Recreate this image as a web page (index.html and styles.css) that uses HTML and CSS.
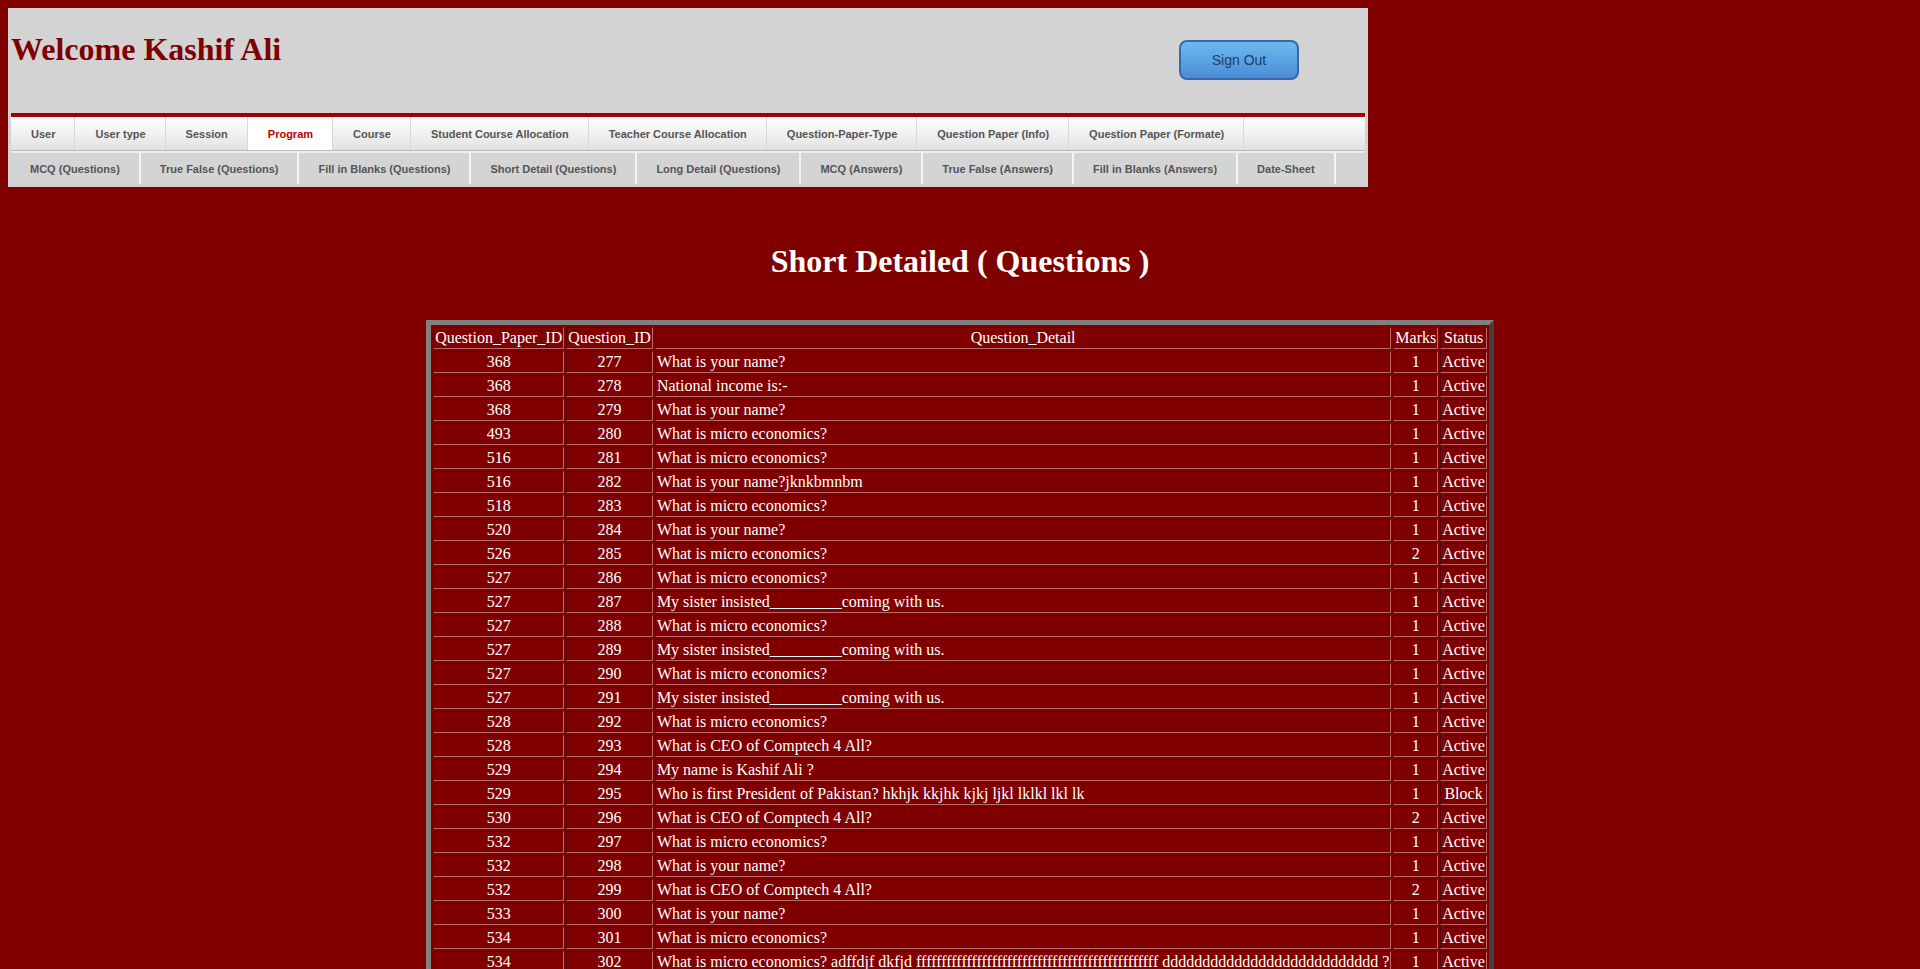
FILE: index.html
```html
<!DOCTYPE html>
<html>
<head>
<meta charset="utf-8">
<title>Short Detailed ( Questions )</title>
<link rel="stylesheet" href="styles.css">
</head>
<body>
<div class="panel">
  <div class="topbar">
    <h1 class="welcome">Welcome Kashif Ali</h1>
    <button class="signout" type="button">Sign Out</button>
  </div>
  <nav class="menu">
    <ul class="row row1">
      <li>User</li>
      <li>User type</li>
      <li>Session</li>
      <li class="active">Program</li>
      <li>Course</li>
      <li>Student Course Allocation</li>
      <li>Teacher Course Allocation</li>
      <li>Question-Paper-Type</li>
      <li>Question Paper (Info)</li>
      <li>Question Paper (Formate)</li>
    </ul>
    <ul class="row row2">
      <li>MCQ (Questions)</li>
      <li>True False (Questions)</li>
      <li>Fill in Blanks (Questions)</li>
      <li>Short Detail (Questions)</li>
      <li>Long Detail (Questions)</li>
      <li>MCQ (Answers)</li>
      <li>True False (Answers)</li>
      <li>Fill in Blanks (Answers)</li>
      <li>Date-Sheet</li>
    </ul>
  </nav>
</div>

<h1 class="page-title">Short Detailed ( Questions )</h1>

<table class="grid">
  <tr><th>Question_Paper_ID</th><th>Question_ID</th><th>Question_Detail</th><th>Marks</th><th>Status</th></tr>
  <tr><td>368</td><td>277</td><td class="q">What is your name?</td><td>1</td><td>Active</td></tr>
  <tr><td>368</td><td>278</td><td class="q">National income is:-</td><td>1</td><td>Active</td></tr>
  <tr><td>368</td><td>279</td><td class="q">What is your name?</td><td>1</td><td>Active</td></tr>
  <tr><td>493</td><td>280</td><td class="q">What is micro economics?</td><td>1</td><td>Active</td></tr>
  <tr><td>516</td><td>281</td><td class="q">What is micro economics?</td><td>1</td><td>Active</td></tr>
  <tr><td>516</td><td>282</td><td class="q">What is your name?jknkbmnbm</td><td>1</td><td>Active</td></tr>
  <tr><td>518</td><td>283</td><td class="q">What is micro economics?</td><td>1</td><td>Active</td></tr>
  <tr><td>520</td><td>284</td><td class="q">What is your name?</td><td>1</td><td>Active</td></tr>
  <tr><td>526</td><td>285</td><td class="q">What is micro economics?</td><td>2</td><td>Active</td></tr>
  <tr><td>527</td><td>286</td><td class="q">What is micro economics?</td><td>1</td><td>Active</td></tr>
  <tr><td>527</td><td>287</td><td class="q">My sister insisted_________coming with us.</td><td>1</td><td>Active</td></tr>
  <tr><td>527</td><td>288</td><td class="q">What is micro economics?</td><td>1</td><td>Active</td></tr>
  <tr><td>527</td><td>289</td><td class="q">My sister insisted_________coming with us.</td><td>1</td><td>Active</td></tr>
  <tr><td>527</td><td>290</td><td class="q">What is micro economics?</td><td>1</td><td>Active</td></tr>
  <tr><td>527</td><td>291</td><td class="q">My sister insisted_________coming with us.</td><td>1</td><td>Active</td></tr>
  <tr><td>528</td><td>292</td><td class="q">What is micro economics?</td><td>1</td><td>Active</td></tr>
  <tr><td>528</td><td>293</td><td class="q">What is CEO of Comptech 4 All?</td><td>1</td><td>Active</td></tr>
  <tr><td>529</td><td>294</td><td class="q">My name is Kashif Ali ?</td><td>1</td><td>Active</td></tr>
  <tr><td>529</td><td>295</td><td class="q">Who is first President of Pakistan? hkhjk kkjhk kjkj ljkl lklkl lkl lk</td><td>1</td><td>Block</td></tr>
  <tr><td>530</td><td>296</td><td class="q">What is CEO of Comptech 4 All?</td><td>2</td><td>Active</td></tr>
  <tr><td>532</td><td>297</td><td class="q">What is micro economics?</td><td>1</td><td>Active</td></tr>
  <tr><td>532</td><td>298</td><td class="q">What is your name?</td><td>1</td><td>Active</td></tr>
  <tr><td>532</td><td>299</td><td class="q">What is CEO of Comptech 4 All?</td><td>2</td><td>Active</td></tr>
  <tr><td>533</td><td>300</td><td class="q">What is your name?</td><td>1</td><td>Active</td></tr>
  <tr><td>534</td><td>301</td><td class="q">What is micro economics?</td><td>1</td><td>Active</td></tr>
  <tr><td>534</td><td>302</td><td class="q">What is micro economics? adffdjf dkfjd ffffffffffffffffffffffffffffffffffffffffffffffff ddddddddddddddddddddddddddd ?</td><td>1</td><td>Active</td></tr>
</table>
</body>
</html>
```

FILE: styles.css
```css
html, body {
  background: #800000;
}

body {
  margin: 8px;
  font-family: "Liberation Serif", "Times New Roman", serif;
}

.panel {
  width: 1354px;
  padding: 3px;
  background: #d3d3d3;
}

.topbar {
  display: flex;
  justify-content: space-between;
  align-items: flex-start;
  height: 102px;
}

.welcome {
  margin: 20px 0 0 0;
  font-size: 32px;
  line-height: 37px;
  font-weight: bold;
  color: #800000;
}

.signout {
  margin: 29px 66px 0 0;
  width: 120px;
  height: 40px;
  border: 2px solid #3769a9;
  border-radius: 8px;
  background: linear-gradient(#6cbaf0, #4a8cd5);
  color: #1d3d68;
  font-family: "Liberation Sans", Arial, sans-serif;
  font-size: 14px;
  padding: 0;
}

.menu {
  border-top: 4px solid #a60000;
}

.row {
  display: flex;
  list-style: none;
  margin: 0;
  padding: 0;
  font-family: "Liberation Sans", Arial, sans-serif;
  font-size: 11px;
  font-weight: bold;
  color: #555555;
}

.row li {
  display: flex;
  align-items: center;
  white-space: nowrap;
}

.row1 {
  height: 33px;
  background: linear-gradient(#ffffff, #e2e2e2);
  border-bottom: 1px solid #b9b9b9;
}

.row1 li {
  padding: 0 19px 0 20px;
  border-right: 1px solid #d9d9d9;
}

.row1 li.active {
  background: #ffffff;
  color: #c00000;
}

.row2 {
  height: 31px;
  background: #d4d4d4;
  border-top: 2px solid #ededed;
}

.row2 li {
  padding: 0 19px;
  border-right: 2px solid #f4f4f4;
}

.page-title {
  margin: 56px 0 40px;
  text-align: center;
  font-size: 32px;
  line-height: 37px;
  font-weight: bold;
  color: #ffffff;
}

.grid {
  margin: 0 auto;
  border-collapse: separate;
  border-spacing: 2px;
  border: 5px solid;
  border-color: #808080 #404040 #404040 #808080;
  color: #ffffff;
  font-size: 16px;
}

.grid th,
.grid td {
  padding: 1px;
  border: 1px solid;
  border-color: #4a0000 #b86c6c #b86c6c #4a0000;
  font-weight: normal;
  text-align: center;
  white-space: nowrap;
}

.grid td.q {
  text-align: left;
}
```
